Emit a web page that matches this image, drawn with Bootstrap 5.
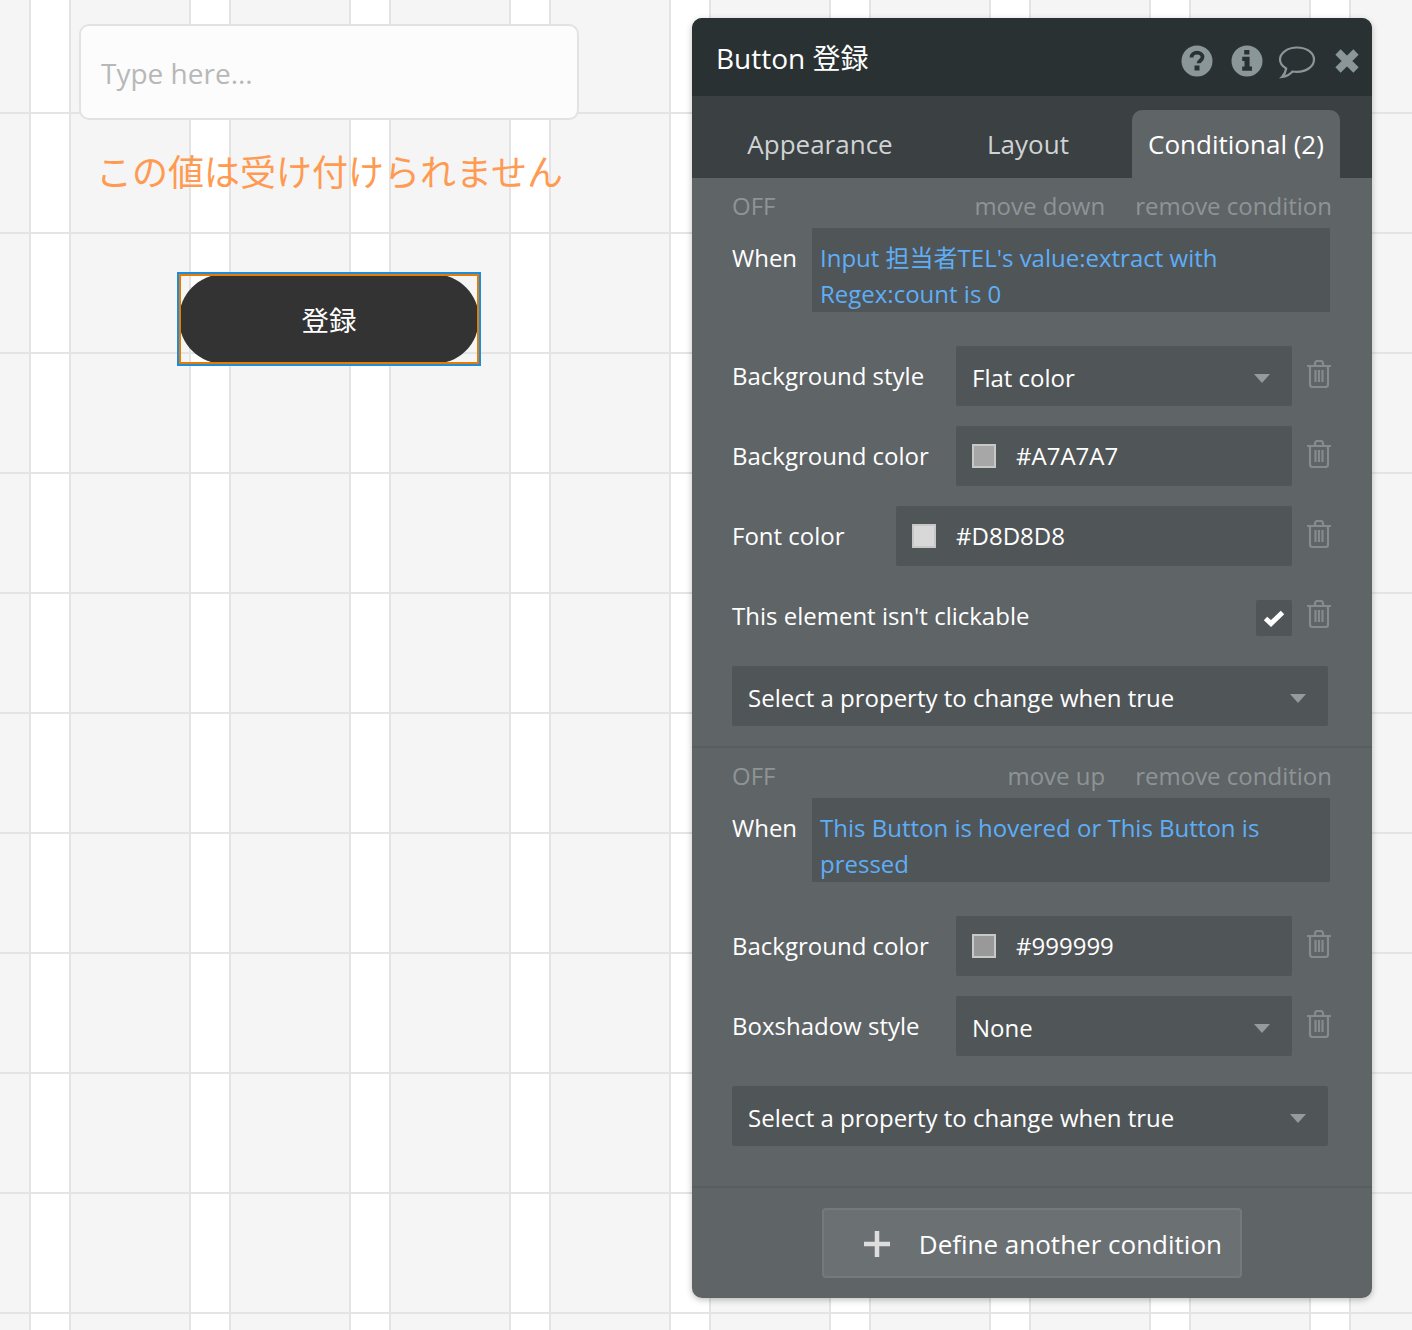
<!DOCTYPE html>
<html lang="ja"><head><meta charset="utf-8"><title>Button</title>
<link rel="stylesheet" href="https://cdn.jsdelivr.net/npm/bootstrap@5.3.0/dist/css/bootstrap.min.css">
<style>
html,body{height:100%}
body{margin:0;height:1330px;overflow:hidden;font-family:"Open Sans","Noto Sans CJK JP",sans-serif;background-color:#f5f5f5;
background-image:repeating-linear-gradient(180deg,transparent 0 112px,#e4e4e4 112px 114px,transparent 114px 120px),repeating-linear-gradient(90deg,#f5f5f5 0 29px,#e4e4e4 29px 31px,#fff 31px 69px,#e4e4e4 69px 71px,#f5f5f5 71px 160px)}
.stage{padding:18px 40px 0 79px;gap:113px}
.leftcol{width:500px;padding-top:6px}
.type-input.form-control{height:96px;border:2px solid #e2e2e2;border-radius:10px;background:#fcfcfc;font-size:28px;padding:2px 20px 0;color:#333;font-family:"Open Sans",sans-serif;box-shadow:none}
.type-input::placeholder{color:#b8b8b8;opacity:1}
.err-text{font-size:36px;color:#ff9a52;line-height:48px;margin:26px 0 0 17px;white-space:nowrap;font-family:"Noto Sans CJK JP",sans-serif}
.sel-outer{width:304px;height:94px;margin:78px 0 0 98px;border:2px solid #1a8de0}
.sel-inner{height:100%;position:relative}
.sel-inner::after{content:"";position:absolute;inset:0;border:2px solid #e87c00;pointer-events:none}
.pill-btn.btn{display:block;width:100%;height:100%;border:0;border-radius:46px;background:#333;color:#fff;font-size:27.5px;padding:2px 0 0;font-family:"Noto Sans CJK JP",sans-serif}
.panel{width:680px;height:1280px;background:#5f6467;border-radius:10px;overflow:hidden;flex:none;box-shadow:0 2px 6px rgba(0,0,0,.25)}
.phead{height:78px;background:#2a3133;color:#fff;font-size:28px;padding:0 12px 0 24px}
.phead .ttl{line-height:80px;margin-top:2px}
.hicons{margin-top:7px}
.ic-gap16{margin-right:16px}.ic-gap14{margin-right:14px}.ic-gap18{margin-right:18px}
.tabbar{height:82px;background:#3b4043;padding:14px 32px 0 0}
.tb{font-size:26px;color:#d0d3d4;width:200px;line-height:68px;height:68px;text-align:center}
.tb.first{margin-left:28px}
.tb.second{width:208px;margin-left:4px}
.tb.on{width:208px;background:#5f6467;border-radius:10px 10px 0 0;color:#fff}
.sect{padding:0 40px}
.offrow{height:50px;font-size:24px;color:#8e9496;align-items:center;padding-top:5px}
.offrow .gapper{gap:30px}
.whenrow{height:84px;font-size:24px;color:#fff}
.whenrow .lbl{width:80px;line-height:60px}
.whenbox{width:518px;margin-right:-2px;background:#505558;color:#5eaef7;font-size:24px;line-height:36px;padding:12px 8px 0}
.frow{height:60px;margin-top:20px;font-size:24px;color:#fff;align-items:center}
.frow .lbl{margin-right:auto;line-height:1;margin-top:0}
.frow.first-f{margin-top:34px}
.fbox{height:60px;background:#505558;border-radius:2px;color:#fff;padding:0 16px;font-size:24px;flex:none}
.fbox.dd{padding:4px 22px 0 16px}
.w336{width:336px}.w396{width:396px}
.swatch{width:24px;height:24px;border:2px solid #c8c8c8;margin-right:20px;flex:none}
.tr{width:24px;height:28px;margin:-5px 1px 0 15px;flex:none}
.chk{width:36px;height:36px;background:#505558;border-radius:2px;margin-top:4px}
.wide{height:60px;margin-top:30px;width:596px;background:#505558;border-radius:2px;color:#fff;font-size:24px;padding:4px 22px 0 16px}
.wide.tight{margin-top:20px}
.caret-d{width:0;height:0;border-left:8px solid transparent;border-right:8px solid transparent;border-top:9px solid #959a9c}
.divline{height:2px;background:#585d60;margin-top:20px}
.divline.lower{margin-top:40px}
.addwrap{height:110px}
.add-btn.btn{width:420px;height:70px;background:#6b7073;border:2px solid #74797c;border-radius:4px;color:#fff;font-size:26px;padding:2px 18px 0 38px;font-family:"Open Sans",sans-serif}
</style></head>
<body>
<div class="stage d-flex align-items-start">
  <div class="leftcol">
    <input class="form-control type-input" type="text" placeholder="Type here...">
    <div class="err-text">この値は受け付けられません</div>
    <div class="sel-outer"><div class="sel-inner"><button class="btn pill-btn" type="button">登録</button></div></div>
  </div>
  <div class="panel d-flex flex-column">
    <div class="phead d-flex align-items-center justify-content-between">
      <div class="ttl">Button 登録</div>
      <div class="hicons d-flex align-items-center">
        <svg width="34" height="34" viewBox="0 0 34 34" class="ic-gap16"><circle cx="17" cy="17" r="15.5" fill="#8a9698"/><path d="M11.500 13.500c0-3 2.500-4.800 5.600-4.800 3 0 5.400 1.800 5.400 4.400 0 3.500-4 3.600-4 6.200" fill="none" stroke="#2a3133" stroke-width="3.800"/><rect x="14.500" y="21.500" width="5" height="5" fill="#2a3133"/></svg>
        <svg width="34" height="34" viewBox="0 0 34 34" class="ic-gap14"><circle cx="17" cy="17" r="15.5" fill="#8a9698"/><path d="M14.200 6h5.200v4.500h-5.200zM12.200 12.800h7.400v9.600h2.400v4.300H12.200v-4.300h2.300v-5.300h-2.300z" fill="#2a3133"/></svg>
        <svg width="38" height="36" viewBox="0 0 38 36" class="ic-gap18"><path d="M19 4.500C9.600 4.500 2 9.900 2 16.500c0 3.600 2.400 6.800 6.200 9-.4 3-1.800 6-4.200 8.500 4.400-.6 8-2.700 10.500-5.500 1.500.2 3 .3 4.500.3 9.400 0 17-5.400 17-12.300S28.400 4.500 19 4.500z" fill="none" stroke="#8a9698" stroke-width="2.200"/></svg>
        <svg width="26" height="26" viewBox="0 0 26 26"><path d="M4 4l18 18M22 4L4 22" stroke="#8a9698" stroke-width="7.500"/></svg>
      </div>
    </div>
    <div class="tabbar d-flex">
      <div class="tb first">Appearance</div>
      <div class="tb second">Layout</div>
      <div class="tb on">Conditional (2)</div>
    </div>

    <div class="sect">
      <div class="offrow d-flex justify-content-between"><span>OFF</span><span class="gapper d-flex"><span>move down</span><span>remove condition</span></span></div>
      <div class="whenrow d-flex"><div class="lbl">When</div><div class="whenbox">Input 担当者TEL's value:extract with Regex:count is 0</div></div>
      <div class="frow first-f d-flex"><div class="lbl">Background style</div><div class="fbox dd w336 d-flex align-items-center justify-content-between"><span>Flat color</span><span class="caret-d"></span></div><svg class="tr" viewBox="0 0 24 28"><use href="#trash"/></svg></div>
      <div class="frow d-flex"><div class="lbl">Background color</div><div class="fbox w336 d-flex align-items-center"><span class="swatch" style="background:#a7a7a7"></span><span>#A7A7A7</span></div><svg class="tr" viewBox="0 0 24 28"><use href="#trash"/></svg></div>
      <div class="frow d-flex"><div class="lbl">Font color</div><div class="fbox w396 d-flex align-items-center"><span class="swatch" style="background:#d8d8d8"></span><span>#D8D8D8</span></div><svg class="tr" viewBox="0 0 24 28"><use href="#trash"/></svg></div>
      <div class="frow d-flex"><div class="lbl">This element isn't clickable</div><div class="chk d-flex align-items-center justify-content-center"><svg width="22" height="18" viewBox="0 0 22 18"><path d="M2.500 9.500l5.500 5L19.500 3.500" fill="none" stroke="#fff" stroke-width="5"/></svg></div><svg class="tr" viewBox="0 0 24 28"><use href="#trash"/></svg></div>
      <div class="wide tight d-flex align-items-center justify-content-between"><span>Select a property to change when true</span><span class="caret-d"></span></div>
    </div>
    <div class="divline"></div>
    <div class="sect">
      <div class="offrow d-flex justify-content-between"><span>OFF</span><span class="gapper d-flex"><span>move up</span><span>remove condition</span></span></div>
      <div class="whenrow d-flex"><div class="lbl">When</div><div class="whenbox">This Button is hovered or This Button is pressed</div></div>
      <div class="frow first-f d-flex"><div class="lbl">Background color</div><div class="fbox w336 d-flex align-items-center"><span class="swatch" style="background:#999"></span><span>#999999</span></div><svg class="tr" viewBox="0 0 24 28"><use href="#trash"/></svg></div>
      <div class="frow d-flex"><div class="lbl">Boxshadow style</div><div class="fbox dd w336 d-flex align-items-center justify-content-between"><span>None</span><span class="caret-d"></span></div><svg class="tr" viewBox="0 0 24 28"><use href="#trash"/></svg></div>
      <div class="wide d-flex align-items-center justify-content-between"><span>Select a property to change when true</span><span class="caret-d"></span></div>
    </div>
    <div class="divline lower"></div>
    <div class="addwrap d-flex align-items-center justify-content-center">
      <button class="btn add-btn d-flex align-items-center justify-content-between" type="button"><svg width="30" height="30" viewBox="0 0 30 30"><path d="M15 2v26M2 15h26" stroke="#ddd" stroke-width="4.500"/></svg><span>Define another condition</span></button>
    </div>
  </div>
</div>
<svg width="0" height="0" class="position-absolute"><defs><g id="trash" fill="none" stroke="#868b8d" stroke-width="2.200"><path d="M0 6h24M8 6V3.500C8 2 9 1 10.500 1h3C15 1 16 2 16 3.500V6M3 6v18.500C3 26 4 27 5.500 27h13c1.500 0 2.500-1 2.500-2.500V6M8.500 10v12M12 10v12M15.500 10v12"/></g></defs></svg>
</body></html>
